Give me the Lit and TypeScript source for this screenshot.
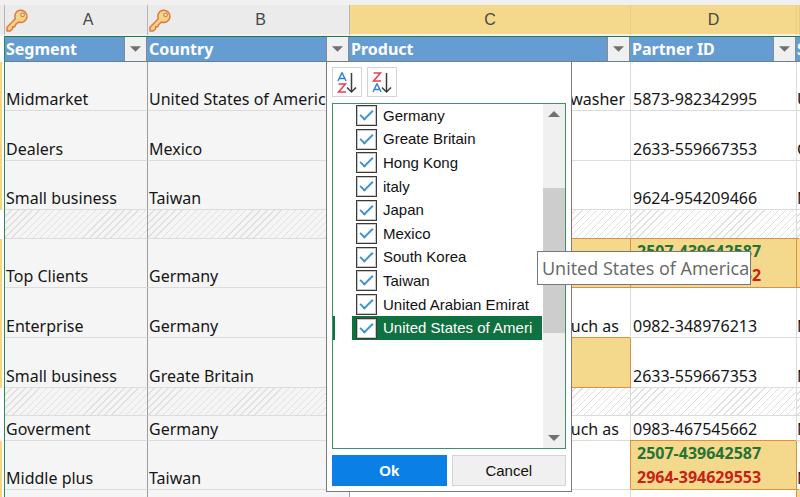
import { LitElement, html, css, svg, nothing } from "lit";
import { customElement, state } from "lit/decorators.js";
import { classMap } from "lit/directives/class-map.js";
import { styleMap } from "lit/directives/style-map.js";

interface Row {
  height: number;
  hatch?: boolean;
  segment?: string;
  country?: string;
  product?: string;
  partner?: string[];
  extra?: string;
  marked?: string;
}

const ROWS: Row[] = [
  { height: 49, segment: "Midmarket", country: "United States of America", product: "Dishwasher", partner: ["5873-982342995"], extra: "U" },
  { height: 50, segment: "Dealers", country: "Mexico", partner: ["2633-559667353"], extra: "G" },
  { height: 49, segment: "Small business", country: "Taiwan", partner: ["9624-954209466"], extra: "M" },
  { height: 29, hatch: true },
  { height: 49, segment: "Top Clients", country: "Germany", partner: ["2507-439642587", "2964-394629562"], marked: "CDE" },
  { height: 50, segment: "Enterprise", country: "Germany", product: "such as", partner: ["0982-348976213"], extra: "M" },
  { height: 50, segment: "Small business", country: "Greate Britain", partner: ["2633-559667353"], extra: "M", marked: "C" },
  { height: 28, hatch: true },
  { height: 25, segment: "Goverment", country: "Germany", product: "such as", partner: ["0983-467545662"], extra: "M" },
  { height: 49, segment: "Middle plus", country: "Taiwan", partner: ["2507-439642587", "2964-394629553"], extra: "M", marked: "D" },
  { height: 49, marked: "E" },
];

const COUNTRIES = [
  "Germany",
  "Greate Britain",
  "Hong Kong",
  "italy",
  "Japan",
  "Mexico",
  "South Korea",
  "Taiwan",
  "United Arabian Emirat",
  "United States of Ameri",
];

const keyIcon = html`<svg class="key" viewBox="0 0 24 24" aria-hidden="true">
  <path d="M10.300 10.800L2 19.200V23H5.200L7.600 20.800V18.800H9.800L10.600 16.600L13.600 14A6.100 6.100 0 1 0 10.300 10.800z" fill="#f6d28a" stroke="#df7a3c" stroke-width="1.500" stroke-linejoin="round"></path>
  <circle cx="17.600" cy="6.800" r="1.800" fill="#fbeed2" stroke="#df7a3c" stroke-width="1.200"></circle>
</svg>`;

const glyphA = (y: number) => svg`<path d="M5 ${y + 8}L8.800 ${y}H9.200L13 ${y + 8}M6.500 ${y + 5.5}H11.500" stroke="#2b86cf"></path>`;
const glyphZ = (y: number) => svg`<path d="M5.500 ${y}H12.500L5.500 ${y + 8}H13" stroke="#e0414d"></path>`;

const sortIcon = (ascending: boolean) => html`<svg class="sort-icon" viewBox="0 0 28 28" aria-hidden="true">
  <g fill="none" stroke-width="1.500">
    ${ascending ? glyphA(5) : glyphZ(5)} ${ascending ? glyphZ(16) : glyphA(16)}
    <path d="M18.500 5V24M14 19.500L18.500 24L23 19.500" stroke="#3c3c3c"></path>
  </g>
</svg>`;

const caret = (up = false) => html`<svg class="caret" viewBox="0 0 12 6" aria-hidden="true">
  <path d=${up ? "M0 6L6 0L12 6z" : "M0 0H12L6 6z"} fill="#707070"></path>
</svg>`;

@customElement("country-filter")
export class CountryFilter extends LitElement {
  @state() private checked = new Set(COUNTRIES);

  static styles = css`
    :host {
      display: flex;
      flex-direction: column;
      gap: 6px;
      box-sizing: border-box;
      width: 246px;
      padding: 5px;
      background: #fff;
      border: 1px solid #7c7c7c;
      font: 15px/20px "Liberation Sans", sans-serif;
      color: #111;
    }
    button {
      font: inherit;
      color: inherit;
      padding: 0;
      border: 1px solid #d4d4d4;
      border-radius: 0;
    }
    .sorts, .actions { display: flex; gap: 5px; }
    .sort { width: 30px; height: 30px; background: #fff; display: grid; place-items: center; }
    .sort-icon { width: 28px; height: 28px; display: block; }
    .box { display: flex; border: 1px solid #3f8f67; height: 344px; }
    .list {
      flex: 1;
      min-width: 0;
      display: grid;
      grid-auto-rows: 1fr;
      height: 236px;
      margin: 0;
      padding: 0;
      list-style: none;
    }
    .item { display: flex; padding-left: 19px; }
    .item.active { border-left: 2px solid #0f7040; padding-left: 17px; }
    .item.active .choice { background: #0f7040; color: #fff; }
    .choice { flex: 1; display: flex; align-items: center; gap: 6px; padding-left: 4px; margin-right: 1px; white-space: nowrap; }
    .tick {
      appearance: none;
      margin: 0;
      width: 21px;
      height: 21px;
      box-sizing: border-box;
      border: 1px solid #3a3a3a;
      box-shadow: inset 0 0 0 1px #c8c8c8;
      background: #fff;
      display: grid;
      place-items: center;
    }
    .tick:checked::before {
      content: "";
      width: 11px;
      height: 5px;
      border-left: 2px solid #3a93d4;
      border-bottom: 2px solid #3a93d4;
      rotate: -45deg;
      translate: 0 -2px;
    }
    .bar { width: 22px; background: #f0f0f0; display: flex; flex-direction: column; }
    .arrow { border: 0; background: none; height: 20px; display: grid; place-items: center; }
    .before { height: 64px; }
    .thumb { height: 145px; background: #cdcdcd; }
    .after { flex: 1; }
    .caret { width: 12px; height: 6px; display: block; }
    .action { flex: 1; height: 31px; background: #f0f0f0; }
    .ok { background: #0a80e6; border-color: #0a80e6; color: #fff; font-weight: bold; }
    .tip {
      position: absolute;
      left: 210px;
      top: 189px;
      padding: 4px 1px 4px 4px;
      border: 1px solid #777;
      background: #fff;
      color: #666;
      font: 18px/24px "Open Sans", "Noto Sans", sans-serif;
      white-space: nowrap;
    }
  `;

  private toggle(name: string) {
    const next = new Set(this.checked);
    next.has(name) ? next.delete(name) : next.add(name);
    this.checked = next;
  }

  render() {
    return html`
      <div class="sorts">
        <button class="sort" aria-label="Sort ascending">${sortIcon(true)}</button>
        <button class="sort" aria-label="Sort descending">${sortIcon(false)}</button>
      </div>
      <div class="box">
        <ul class="list">
          ${COUNTRIES.map(
            (name, i) => html`<li class=${classMap({ item: true, active: i === COUNTRIES.length - 1 })}>
              <label class="choice">
                <input class="tick" type="checkbox" .checked=${this.checked.has(name)} @change=${() => this.toggle(name)} />${name}
              </label>
            </li>`
          )}
        </ul>
        <div class="bar">
          <button class="arrow" aria-label="Scroll up">${caret(true)}</button>
          <div class="before"></div>
          <div class="thumb"></div>
          <div class="after"></div>
          <button class="arrow" aria-label="Scroll down">${caret()}</button>
        </div>
      </div>
      <div class="actions">
        <button class="action ok">Ok</button>
        <button class="action">Cancel</button>
      </div>
      <div class="tip" role="tooltip">United States of America</div>
    `;
  }
}

@customElement("app-root")
export class AppRoot extends LitElement {
  static styles = css`
    :host {
      display: block;
      height: 100vh;
      overflow: hidden;
      background: #fff;
      font: 16px/22px "Noto Sans", "Open Sans", sans-serif;
      color: #151515;
    }
    .band { height: 5px; background: #f0f0f0; }
    .sheet { width: 100%; border-collapse: separate; border-spacing: 0; table-layout: fixed; }
    .w-edge { width: 5px; }
    .w-a { width: 143px; }
    .w-b { width: 202px; }
    .w-d { width: 166px; }
    .w-e { width: 3px; }
    th, td { padding: 0; box-sizing: border-box; text-align: left; font-weight: normal; white-space: nowrap; }
    .letter {
      height: 31px;
      background: #ebebeb;
      border-right: 1px solid #b5b5b5;
      border-bottom: 2px solid #f4f2ec;
      font: 16px/24px "Liberation Sans", sans-serif;
      color: #484848;
    }
    .letter.gold { background: #f4d98c; border-right-color: #e6cd84; }
    .letter-in { display: flex; align-items: center; }
    .letter-text { flex: 1; text-align: center; }
    .key { width: 24px; height: 24px; }
    .title {
      height: 26px;
      background: #659dd3;
      border-top: 1px solid #1f7a58;
      border-bottom: 1px solid #6a7f92;
      color: #fff;
      font-weight: bold;
      line-height: 24px;
    }
    .title-in { display: flex; height: 24px; padding: 0 1px; }
    .title-text { flex: 1; }
    .filter { position: relative; display: flex; }
    .filter-button {
      width: 23px;
      height: 24px;
      padding: 0;
      border: 1px solid #8a8a8a;
      border-width: 0 1px 0 1px;
      border-radius: 0;
      background: #f0f0f0;
      display: grid;
      place-items: center;
    }
    .caret { width: 11px; height: 6px; display: block; }
    .popup { position: absolute; left: 0; top: 100%; z-index: 2; font-weight: normal; }
    .edge { border-right: 1px solid #2f8560; background: #fff; }
    .corner { border-right: 1px solid #b5b5b5; }
    .edge.on { background: linear-gradient(to right, #f6d583 2px, #fff 2px); }
    .cell { vertical-align: bottom; border-right: 1px solid #dcdcdc; border-bottom: 1px solid #dcdcdc; background-color: #fff; }
    .cell.a, .cell.b { background-color: #f5f5f5; padding-left: 1px; border-right-color: #9d9d9d; }
    .cell.c { text-align: right; padding-right: 5px; }
    .cell.c.such { padding-right: 11px; }
    .cell.d { padding-left: 2px; }
    .e { overflow: hidden; }
    .cell.e { border-right: 0; }
    .hatch { background-image: repeating-linear-gradient(135deg, transparent 0 4px, #e0e0e0 4px 5px); }
    .cell.marked { background-color: #f4d98c; border-color: #e08e42; box-shadow: -1px -1px 0 #e08e42; }
    .pair { display: block; font-weight: bold; line-height: 24px; padding-left: 4px; color: #267336; }
    .pair + .pair { color: #cb2016; }
  `;

  private filter(label: string, open = false) {
    return html`<div class="filter">
      <button class="filter-button" aria-label="Filter ${label}">${caret()}</button>
      ${open ? html`<country-filter class="popup"></country-filter>` : nothing}
    </div>`;
  }

  private title(col: string, label: string, open = false) {
    return html`<th class="title ${col}">
      <div class="title-in"><span class="title-text">${label}</span>${this.filter(label, open)}</div>
    </th>`;
  }

  private cell(row: Row, col: string, content: unknown, more = "") {
    const marked = row.marked?.includes(col.toUpperCase()) ? "marked" : "";
    return html`<td class="cell ${col} ${row.hatch ? "hatch" : ""} ${marked} ${more}">${content ?? nothing}</td>`;
  }

  private row(row: Row) {
    const partner = row.partner ?? [];
    return html`<tr style=${styleMap({ height: `${row.height}px` })}>
      <td class=${classMap({ edge: true, on: !row.hatch && row.height > 28 })}></td>
      ${this.cell(row, "a", row.segment)} ${this.cell(row, "b", row.country)}
      ${this.cell(row, "c", row.product, row.product === "such as" ? "such" : "")}
      ${this.cell(row, "d", partner.length > 1 ? partner.map((id) => html`<span class="pair">${id}</span>`) : partner[0])}
      ${this.cell(row, "e", row.extra)}
    </tr>`;
  }

  render() {
    return html`
      <div class="band"></div>
      <table class="sheet">
        <colgroup>
          <col class="w-edge" /><col class="w-a" /><col class="w-b" /><col /><col class="w-d" /><col class="w-e" />
        </colgroup>
        <thead>
          <tr>
            <td class="letter corner"></td>
            <th class="letter"><div class="letter-in">${keyIcon}<span class="letter-text">A</span></div></th>
            <th class="letter"><div class="letter-in">${keyIcon}<span class="letter-text">B</span></div></th>
            <th class="letter gold"><div class="letter-in"><span class="letter-text">C</span></div></th>
            <th class="letter gold"><div class="letter-in"><span class="letter-text">D</span></div></th>
            <th class="letter gold"></th>
          </tr>
          <tr>
            <td class="edge"></td>
            ${this.title("a", "Segment")} ${this.title("b", "Country", true)} ${this.title("c", "Product")}
            ${this.title("d", "Partner ID")}
            <th class="title e">S</th>
          </tr>
        </thead>
        <tbody>
          ${ROWS.map((r) => this.row(r))}
        </tbody>
      </table>
    `;
  }
}
